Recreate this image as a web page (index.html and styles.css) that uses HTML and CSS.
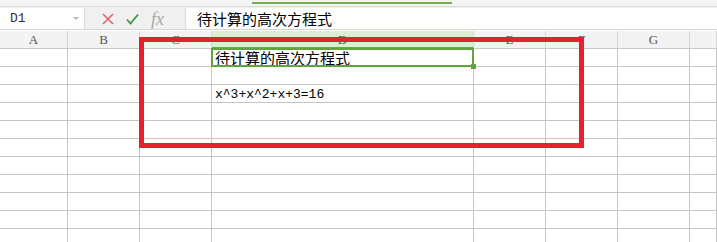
FILE: index.html
```html
<!DOCTYPE html>
<html lang="zh-CN">
<head>
<meta charset="utf-8">
<title>Sheet</title>
<link rel="stylesheet" href="styles.css">
</head>
<body>
<div class="app">
  <div class="tabstrip"><div class="tabline"></div></div>
  <div class="fbar">
    <div class="namebox"><span class="ref">D1</span><span class="caret"></span></div>
    <div class="fbtns">
      <svg class="ico" width="12" height="12" viewBox="0 0 12 12"><path d="M1 1L11 11M11 1L1 11" stroke="#e06666" stroke-width="1.6" fill="none"/></svg>
      <svg class="ico" width="13" height="12" viewBox="0 0 13 12"><path d="M1 6.5L4.5 10.5L12 1.5" stroke="#3d9a3d" stroke-width="1.8" fill="none"/></svg>
      <span class="fx">fx</span>
    </div>
    <div class="finput">待计算的高次方程式</div>
  </div>
  <div class="sheet">
    <div class="grid">
      <div class="hd">A</div><div class="hd">B</div><div class="hd">C</div><div class="hd hd-sel">D</div><div class="hd">E</div><div class="hd">F</div><div class="hd">G</div><div class="hd"></div>

      <div class="c"></div><div class="c"></div><div class="c"></div><div class="c sel cjk">待计算的高次方程式</div><div class="c"></div><div class="c"></div><div class="c"></div><div class="c"></div>
      <div class="c"></div><div class="c"></div><div class="c"></div><div class="c"></div><div class="c"></div><div class="c"></div><div class="c"></div><div class="c"></div>
      <div class="c"></div><div class="c"></div><div class="c"></div><div class="c mono">x^3+x^2+x+3=16</div><div class="c"></div><div class="c"></div><div class="c"></div><div class="c"></div>
      <div class="c"></div><div class="c"></div><div class="c"></div><div class="c"></div><div class="c"></div><div class="c"></div><div class="c"></div><div class="c"></div>
      <div class="c"></div><div class="c"></div><div class="c"></div><div class="c"></div><div class="c"></div><div class="c"></div><div class="c"></div><div class="c"></div>
      <div class="c"></div><div class="c"></div><div class="c"></div><div class="c"></div><div class="c"></div><div class="c"></div><div class="c"></div><div class="c"></div>
      <div class="c"></div><div class="c"></div><div class="c"></div><div class="c"></div><div class="c"></div><div class="c"></div><div class="c"></div><div class="c"></div>
      <div class="c"></div><div class="c"></div><div class="c"></div><div class="c"></div><div class="c"></div><div class="c"></div><div class="c"></div><div class="c"></div>
      <div class="c"></div><div class="c"></div><div class="c"></div><div class="c"></div><div class="c"></div><div class="c"></div><div class="c"></div><div class="c"></div>
      <div class="c"></div><div class="c"></div><div class="c"></div><div class="c"></div><div class="c"></div><div class="c"></div><div class="c"></div><div class="c"></div>
      <div class="c"></div><div class="c"></div><div class="c"></div><div class="c"></div><div class="c"></div><div class="c"></div><div class="c"></div><div class="c"></div>
    </div>
    <div class="annot"></div>
  </div>
</div>
</body>
</html>
```

FILE: styles.css
```css
html, body {
  margin: 0;
  padding: 0;
  background: #ffffff;
  overflow: hidden;
}
.app {
  width: 717px;
  height: 242px;
  overflow: hidden;
  font-family: "Noto Sans CJK SC", "Noto Sans", sans-serif;
}
.tabstrip {
  height: 6px;
  padding-top: 0;
  background: #f4f4f4;
  border-bottom: 1px solid #dadada;
  display: flex;
  align-items: center;
}
.tabline {
  margin-left: 252px;
  width: 200px;
  height: 2px;
  background: #74ae52;
}
.fbar {
  display: flex;
  align-items: stretch;
  height: 21px;
  padding-top: 1px;
  background: #f0f0f0;
  border-bottom: 1px solid #d4d4d4;
  margin-bottom: 1px;
}
.namebox {
  width: 85px;
  background: #ffffff;
  border-right: 1px solid #d9d9d9;
  display: flex;
  align-items: center;
  justify-content: space-between;
  padding: 0 4px 0 10px;
  box-sizing: border-box;
}
.ref {
  font-family: "Liberation Mono", monospace;
  font-size: 13px;
  color: #333333;
}
.caret {
  width: 0;
  height: 0;
  border-left: 3px solid transparent;
  border-right: 3px solid transparent;
  border-top: 3px solid #b8b8b8;
  margin-right: 1px;
}
.fbtns {
  width: 100px;
  display: flex;
  align-items: center;
  padding-left: 17px;
  gap: 12px;
  box-sizing: border-box;
}
.fx {
  font-family: "Liberation Serif", serif;
  font-style: italic;
  font-size: 18px;
  line-height: 18px;
  color: #a8a8a8;
  margin-left: 0;
}
.finput {
  flex: 1;
  background: #ffffff;
  border-left: 1px solid #dcdcdc;
  padding-left: 11px;
  font-size: 15px;
  line-height: 21px;
  color: #000000;
}
.sheet {
  position: relative;
}
.grid {
  display: grid;
  grid-template-columns: 68px 72px 72px 262px 72px 72px 72px 1fr;
  grid-auto-rows: 18px;
}
.hd {
  box-sizing: border-box;
  background: #f3f3f3;
  border-right: 1px solid #d6d6d6;
  border-bottom: 1px solid #c8c8c8;
  font-family: "Liberation Serif", serif;
  font-size: 13px;
  line-height: 18px;
  color: #555555;
  text-align: center;
}
.hd-sel {
  background: #dcedd3;
  border-bottom: 2px solid #6aa84a;
}
.c {
  box-sizing: border-box;
  border-right: 1px solid #c6c6c6;
  border-bottom: 1px solid #c6c6c6;
  padding-left: 3px;
  white-space: nowrap;
  color: #000000;
}
.cjk {
  font-size: 15px;
  line-height: 17px;
}
.mono {
  font-family: "Liberation Mono", monospace;
  font-size: 13px;
  line-height: 20px;
}
.sel {
  position: relative;
}
.sel::after {
  content: "";
  position: absolute;
  left: -1px;
  top: -1px;
  right: -1px;
  bottom: -1px;
  border: 2px solid #62a33e;
}
.sel::before {
  content: "";
  position: absolute;
  right: -3px;
  bottom: -3px;
  width: 5px;
  height: 5px;
  background: #62a33e;
  z-index: 1;
}
.annot {
  position: absolute;
  left: 139px;
  top: 6px;
  width: 445px;
  height: 111px;
  box-sizing: border-box;
  border: 5px solid #e8202b;
}
```
